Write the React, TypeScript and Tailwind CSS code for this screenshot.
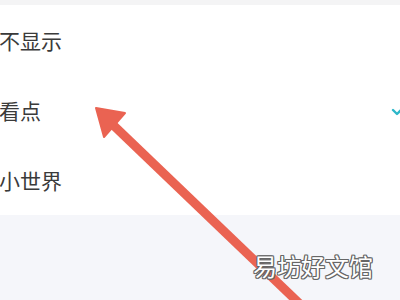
import React from "react";

const rows = [
  { label: "不显示", checked: false },
  { label: "看点", checked: true },
  { label: "小世界", checked: false },
];

const App: React.FC = () => {
  return (
    <div className="relative w-[400px] h-[300px] overflow-hidden bg-[#f5f6fa] font-['Noto_Sans_CJK_SC',sans-serif]">
      <div className="h-[5px] bg-[#f4f4f5]" />
      <div className="flex flex-col bg-white">
        {rows.map((row) => (
          <div key={row.label} className="flex items-center justify-between h-[70px]">
            <span className="text-[21px] leading-none text-[#3a3a3a] -ml-[1px]">{row.label}</span>
            {row.checked && (
              <svg width="14" height="12" viewBox="0 0 14 12" className="-mr-[5px] mt-[2px]">
                <path d="M2 5 L6 9 L13 2" fill="none" stroke="#2db7c9" strokeWidth="2.4" strokeLinecap="round" strokeLinejoin="round" />
              </svg>
            )}
          </div>
        ))}
      </div>
      <svg className="absolute inset-0" width="400" height="300" viewBox="0 0 400 300">
        <line x1="110" y1="122" x2="302" y2="306" stroke="#ea6352" strokeWidth="9" />
        <polygon points="96,108 125,113 104,137" fill="#ea6352" stroke="#ea6352" strokeWidth="2" strokeLinejoin="round" />
      </svg>
      <div className="absolute left-[253px] top-[254px] text-[24px] leading-none text-white [text-shadow:1px_0_0_#666,-1px_0_0_#666,0_1px_0_#666,0_-1px_0_#666,1px_1px_0_#666,-1px_-1px_0_#666,1px_-1px_0_#666,-1px_1px_0_#666]">
        易坊好文馆
      </div>
    </div>
  );
};

export default App;
